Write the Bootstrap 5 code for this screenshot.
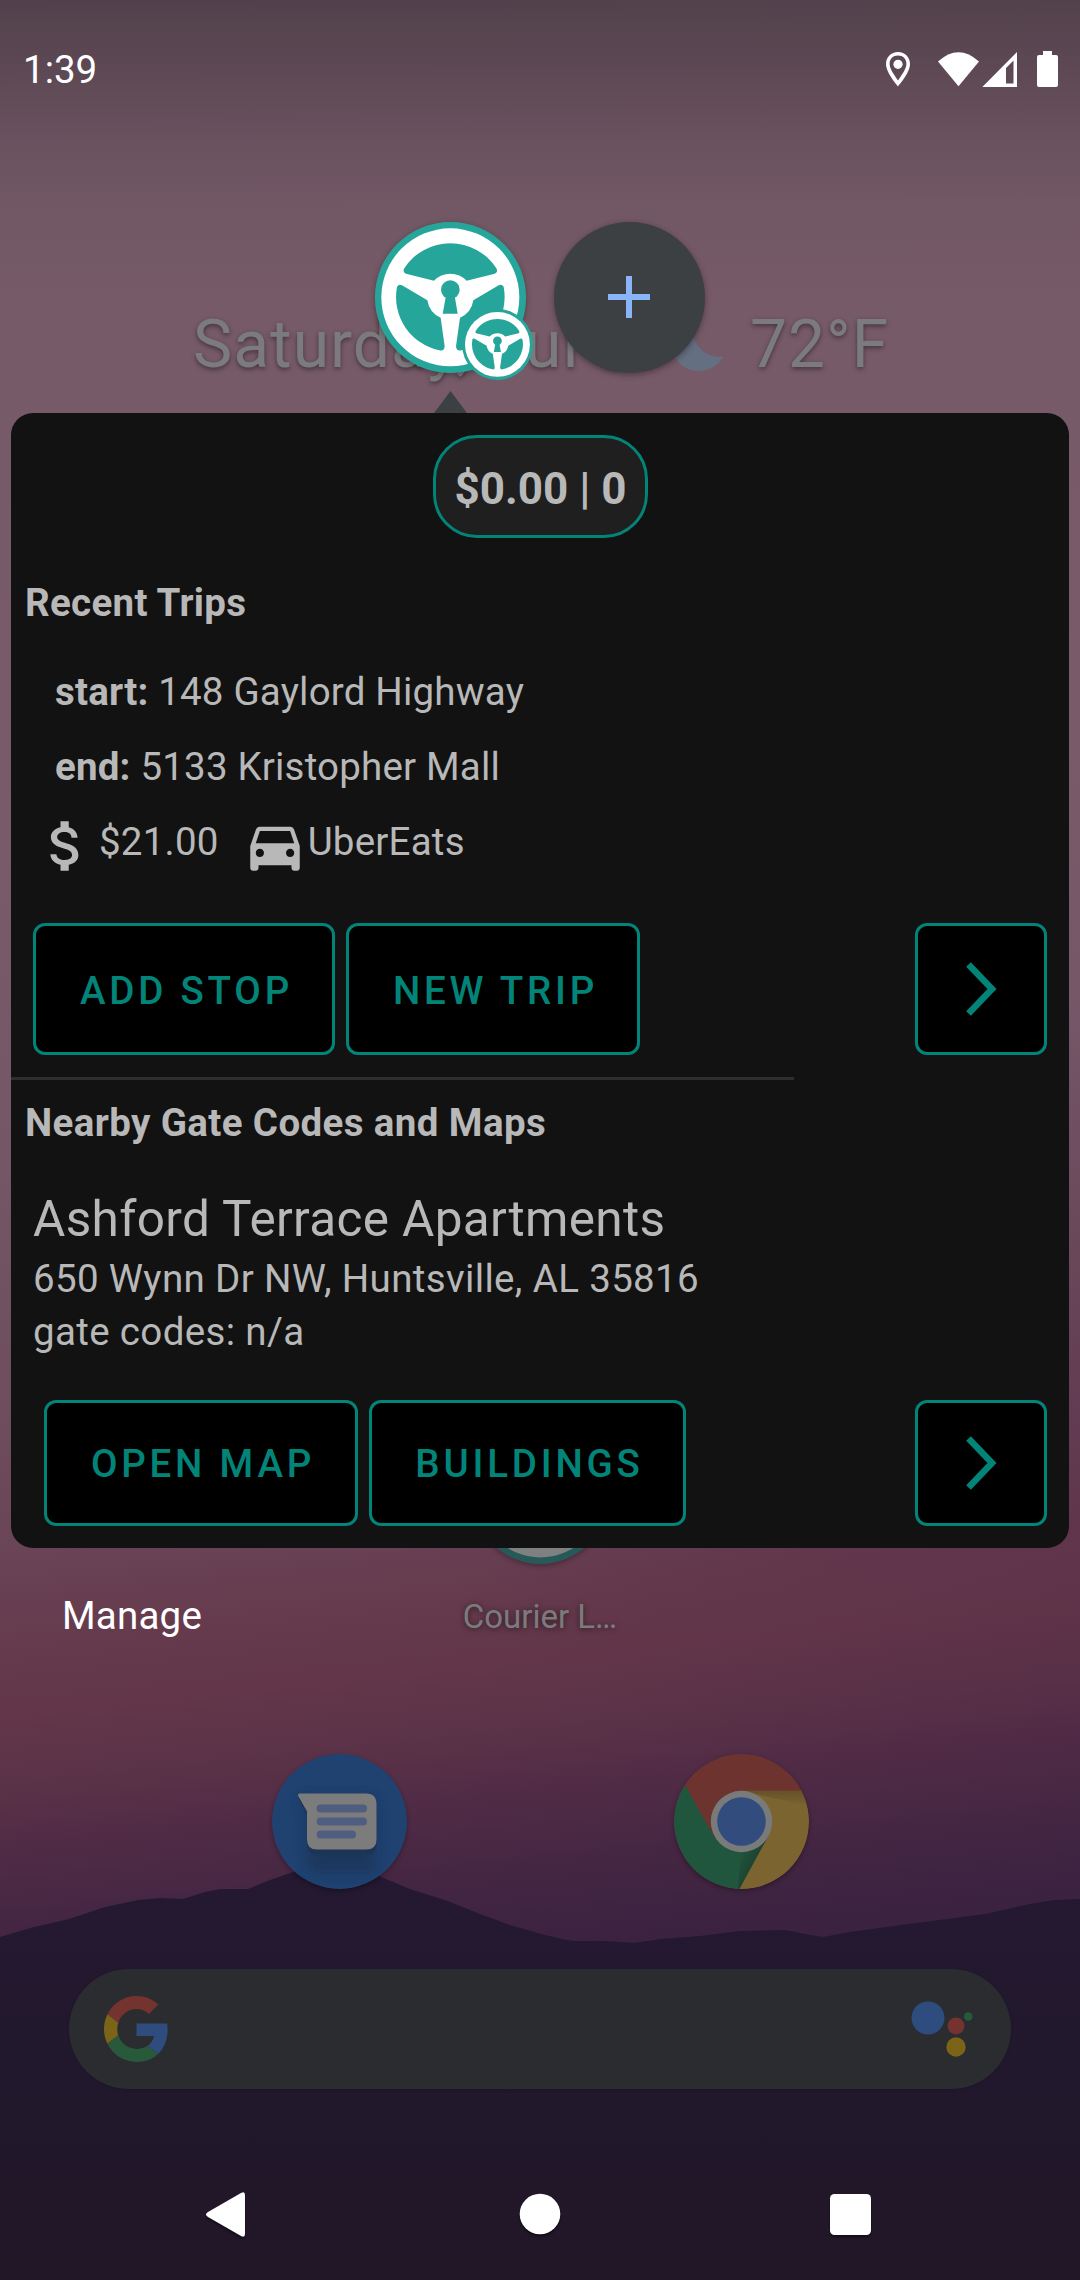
<!DOCTYPE html>
<html lang="en">
<head>
<meta charset="utf-8">
<meta name="viewport" content="width=device-width, initial-scale=1">
<title>Courier bubble</title>
<link href="https://cdn.jsdelivr.net/npm/bootstrap@5.3.0/dist/css/bootstrap.min.css" rel="stylesheet">
<style>
  body { margin: 0; background: #211728; font-family: Roboto, "Noto Sans", sans-serif; font-size: 38.5px; line-height: 45px; }
  .phone { width: 1080px; height: 2280px; overflow: hidden; }
  .wallpaper, .launcher, .overlay { position: absolute; inset: 0; }
  .wallpaper svg { display: block; }
  .sky { background:
    radial-gradient(ellipse 700px 420px at 100% 62%, rgba(72,30,66,.26), rgba(72,30,66,0)),
    linear-gradient(174deg, #745a68 0%, #775a68 17%, #785a68 35.500%, #755768 47%, #6e4e5c 58.500%, #6a4557 64.500%, #663b4e 68.500%, #633649 71.800%, #5a3248 74.800%, #502b46 77.300%, #442642 80.600%, #3a2240 84%, #382040 100%); }
  .scrim { position: absolute; inset: 0 0 auto 0; height: 300px; background: linear-gradient(rgba(34,30,36,.42), rgba(34,30,36,.29) 70px, rgba(34,30,36,.12) 150px, rgba(34,30,36,.06) 200px, rgba(34,30,36,0)); }

  .status-row { height: 136px; padding: 0 21px 0 23px; color: #fff; }
  .status-row span { padding-top: 2px; }
  .bubble-row { padding: 86px 0 0 375px; gap: 28px; }
  .bubble { width: 151px; height: 151px; border-radius: 50%; box-shadow: 0 2px 6px rgba(0,0,0,.35); position: relative; }
  .bubble-add { background: #3c4043; padding: 0 1px 1px 0; }
  .bubble-badge { position: absolute; left: 86.5px; top: 87px; width: 71px; height: 71px; }
  .pointer { margin: 18px 0 0 434px; display: block; }

  .panel { margin: 0 11px; height: 1135px; background: #121212; border-radius: 22px; color: #b8b8b8; padding-top: 22px; }
  .total { height: 103px; width: 215px; margin-left: 422px; border: 3px solid #028578; border-radius: 44px; background: #1f1f1f; font-size: 44px; padding-top: 5px; }
  .panel-title { font-size: 38.5px; line-height: 45px; margin: 0; padding-left: 14px; font-weight: 700; letter-spacing: .38px; }
  .panel-title.trips { margin-top: 42px; letter-spacing: .3px; }
  .trip { padding-left: 44px; margin-top: 44px; gap: 30px; letter-spacing: .19px; }
  .fare { padding-left: 22px; margin-top: 24px; height: 66px; letter-spacing: .22px; }
  .fare span { margin-top: 6px; }
  .fare .car { margin-left: 23px; }
  .fare svg { flex: none; }
  .actions { gap: 11px; padding: 0 22px; }
  .actions.first { margin-top: 44px; }
  .actions.second { margin-top: 46px; padding-left: 33px; }
  .btn.btn-tile { height: 132px; border: 3px solid #028578; border-radius: 12px; background: #000; color: #028578; font-size: 38.5px; line-height: 45px; letter-spacing: 3.8px; font-weight: 500; padding: 2px 0 0 5px; }
  .second .btn.btn-tile { height: 126px; padding: 1px 0 0 4px; }
  .btn.btn-next { padding: 0 !important; }
  .rule { width: 783px; height: 3px; background: #2e2e2e; margin: 22px 0 20px; }
  .place { padding-left: 22px; margin-top: 45px; gap: 8px; letter-spacing: .35px; }
  .place-name { font-size: 49.5px; line-height: 58px; }
  .manage { padding: 45px 0 0 62px; color: #fff; letter-spacing: .2px; }

  .launcher { color: #7b7b7d; }
  .glance { padding: 306px 0 0 193px; font-size: 66px; line-height: 77px; height: 383px; letter-spacing: 1px; text-shadow: 0 2px 5px rgba(0,0,0,.45); white-space: nowrap; }
  .glance .moon { margin: 6px 0 0 34px; }
  .glance .temp { margin-left: 25px; }
  .app { margin-top: 1046px; text-shadow: 0 1px 6px rgba(0,0,0,.6); font-size: 33px; line-height: 39px; }
  .round-icon { border-radius: 50%; box-shadow: 0 2px 5px rgba(0,0,0,.3); display: block; }
  .app .name { margin-top: 33px; }
  .hotseat { margin-top: 118px; padding-left: 272px; gap: 267px; }
  .search { margin: 80px 69px 0; height: 120px; border-radius: 60px; background: #2b2c30; padding: 0 38px 0 35px; box-shadow: 0 1px 3px rgba(0,0,0,.15); }
  .navkeys { margin-top: 95px; height: 60px; padding-left: 206px; }
  .navkeys svg { filter: drop-shadow(0 2px 1px rgba(0,0,0,.5)); }
</style>
</head>
<body>
<svg width="0" height="0" class="position-absolute">
  <defs>
    <symbol id="wheel" viewBox="75 64 453 453">
      <circle cx="301.500" cy="290.500" r="226.500" fill="#26a69a"/>
      <circle cx="301" cy="290" r="207" fill="#fff"/>
      <g fill="#26a69a">
        <path d="M163 203A164 164 0 0 1 439 203Q446 216 431 220L350 240Q330 219 301 219Q272 219 252 240L171 220Q156 216 163 203Z"/>
        <path d="M156 254L232 299Q238 337 272 351L284 437Q283 453 268 449A164 164 0 0 1 141 258Q147 249 156 254Z"/>
        <path d="M446 254L370 299Q364 337 330 351L318 437Q319 453 334 449A164 164 0 0 0 461 258Q455 249 446 254Z"/>
        <circle cx="301" cy="267" r="28"/>
        <path d="M288 285L278 339H323L314 285Z"/>
      </g>
    </symbol>
  </defs>
</svg>

<main class="phone position-relative">
  <div class="wallpaper sky">
    <div class="scrim"></div>
    <svg class="position-relative" width="1080" height="2280" viewBox="0 0 1080 2280">
      <defs>
        <linearGradient id="hill" x1="0" y1="1870" x2="0" y2="2280" gradientUnits="userSpaceOnUse">
          <stop offset="0" stop-color="#241931"/><stop offset=".5" stop-color="#22182d"/><stop offset="1" stop-color="#211727"/>
        </linearGradient>
      </defs>
      <path fill="url(#hill)" d="M0 1937L30 1928L69 1919L105 1907L138 1900L160 1898L183 1899L205 1892L220 1889H248L270 1880L296 1871L320 1866H350L379 1876L410 1889L448 1901L480 1914L510 1925L545 1935L572 1941L605 1941L634 1943L661 1939L700 1936L740 1931L785 1930L805 1934L823 1937L850 1932L916 1923L985 1914L1030 1904L1054 1900L1080 1899V2280H0Z"/>
    </svg>
  </div>

  <div class="launcher d-flex flex-column">
    <div class="glance d-flex">
      <span>Saturday, Jul 3</span>
      <svg class="moon" width="56" height="62" viewBox="668 312 56 62"><path fill="#646f81" d="M693 338C697 351 708 357 722 357A28 28 0 1 1 690 316C688 324 690 332 693 338Z"/></svg>
      <span class="temp">72°F</span>
    </div>
    <div class="app d-flex flex-column align-items-center">
      <svg class="round-icon" width="135" height="135" viewBox="0 0 135 135"><circle cx="67.500" cy="67.500" r="67.500" fill="#255a58"/><circle cx="67.500" cy="67.500" r="61" fill="#7f8080"/></svg>
      <div class="name">Courier L…</div>
    </div>
    <div class="hotseat d-flex">
      <svg class="round-icon" width="135" height="135" viewBox="272 1753.500 135 135">
        <defs><filter id="soft" x="-30%" y="-30%" width="160%" height="180%"><feGaussianBlur stdDeviation="6"/></filter></defs>
        <circle cx="339.500" cy="1821" r="67.500" fill="#1f4271"/>
        <path d="M300 1797H368Q376 1797 376 1808V1864Q376 1872 366 1872H318Q307 1872 307 1862V1816Z" fill="#1d3558" filter="url(#soft)" opacity=".8"/>
        <path d="M298 1797L307 1815V1843Q307 1854 317 1854H366Q376.500 1854 376.500 1844Z" fill="#1c3456"/>
        <path d="M300 1793H366Q376.500 1793 376.500 1804V1839Q376.500 1849 366 1849H317Q307 1849 307 1839V1811L298.500 1796Q297 1793 300 1793Z" fill="#7b7c7b"/>
        <g stroke="#4e5d80" stroke-width="8" stroke-linecap="round"><path d="M320.600 1808H363M320.600 1821H363M320.600 1834H352"/></g>
      </svg>
      <svg class="round-icon" width="135" height="135" viewBox="674 1753.500 135 135">
        <defs>
          <clipPath id="disc"><circle cx="741.500" cy="1821" r="67.500"/></clipPath>
          <linearGradient id="shade" x1="0" y1="0" x2="0" y2="1"><stop offset="0" stop-color="#3c2d1c" stop-opacity=".35"/><stop offset="1" stop-color="#3c2d1c" stop-opacity="0"/></linearGradient>
          <linearGradient id="shadeG" x1="764" y1="1852" x2="744" y2="1842" gradientUnits="userSpaceOnUse"><stop offset="0" stop-color="#1d3528" stop-opacity=".7"/><stop offset="1" stop-color="#1d3528" stop-opacity="0"/></linearGradient>
        </defs>
        <g clip-path="url(#disc)">
          <rect x="674" y="1753" width="136" height="136" fill="#6d332e"/>
          <path d="M741 1790.300H812V1892H736L768 1836Z" fill="#7c6430"/>
          <path d="M741 1790.300H812V1806Z" fill="url(#shade)"/>
          <path d="M684.500 1784L714 1836L741 1851L768 1836L737.500 1892H660V1784Z" fill="#20563d"/>
          <path d="M741 1851L768 1836L737.500 1892Z" fill="url(#shadeG)"/>
        </g>
        <circle cx="741.500" cy="1821" r="30.700" fill="#797a7a"/><circle cx="741.500" cy="1821" r="24.300" fill="#324c7d"/>
      </svg>
    </div>
    <div class="search d-flex align-items-center justify-content-between">
      <svg width="65" height="66" viewBox="0 0 48 48" preserveAspectRatio="none">
        <path fill="#75332f" d="M24 9.500c3.540 0 6.710 1.220 9.210 3.600l6.850-6.850C35.900 2.380 30.470 0 24 0 14.620 0 6.510 5.380 2.560 13.220l7.980 6.190C12.430 13.720 17.740 9.500 24 9.500z"/>
        <path fill="#2e4c7d" d="M46.980 24.550c0-1.570-.15-3.090-.380-4.550H24v9.020h12.940c-.58 2.960-2.260 5.480-4.780 7.180l7.730 6c4.510-4.180 7.090-10.360 7.090-17.650z"/>
        <path fill="#7b6418" d="M10.530 28.590c-.48-1.450-.76-2.990-.76-4.590s.27-3.140.76-4.590l-7.980-6.190C.92 16.460 0 20.120 0 24c0 3.880.92 7.540 2.560 10.780l7.970-6.190z"/>
        <path fill="#28593a" d="M24 48c6.480 0 11.930-2.130 15.890-5.810l-7.730-6c-2.150 1.450-4.920 2.300-8.160 2.300-6.260 0-11.570-4.220-13.470-9.910l-7.980 6.190C6.510 42.620 14.620 48 24 48z"/>
      </svg>
      <svg width="62" height="62" viewBox="911 1998 62 62"><circle cx="928" cy="2018" r="16.500" fill="#2e4c7d"/><circle cx="956" cy="2026" r="8.400" fill="#75332f"/><circle cx="968.300" cy="2016.500" r="4.300" fill="#28593a"/><circle cx="956" cy="2047" r="9.700" fill="#7b6418"/></svg>
    </div>
    <div class="navkeys d-flex align-items-center">
      <svg width="665" height="60" viewBox="206 2184 665 60" fill="#fff">
        <path d="M208 2212L241 2193Q245 2191 245 2195V2234Q245 2238 241 2236L208 2217Q204 2214.500 208 2212Z"/>
        <circle cx="540" cy="2214" r="20.300"/>
        <rect x="830" y="2194" width="41" height="41" rx="4.500"/>
      </svg>
    </div>
  </div>

  <div class="overlay d-flex flex-column">
    <header class="status-row d-flex align-items-center justify-content-between">
      <span>1:39</span>
      <svg width="174" height="40" viewBox="885 46 174 40" fill="#fff">
        <path fill-rule="evenodd" d="M898 50C905 50 910 55 910 62C910 71 898 84.300 898 84.300S886 71 886 62C886 55 891 50 898 50ZM898 53.600C893 53.600 889.600 57 889.600 62C889.600 67 895 74 898 78.400C901 74 906.400 67 906.400 62C906.400 57 903 53.600 898 53.600Z"/>
        <circle cx="898" cy="62.300" r="4.600"/>
        <path d="M938 59.500Q958.500 41 979 59.500L958.500 84.300Z"/>
        <path fill-rule="evenodd" d="M1017 50V85H982.300ZM1013.500 58.500L1006 66V81.500H1013.500Z"/>
        <path d="M1043 49h9v4h4q2 0 2 2V83q0 2-2 2h-17q-2 0-2-2V55q0-2 2-2h4z"/>
      </svg>
    </header>
    <div class="bubble-row d-flex">
      <div class="bubble">
        <svg class="d-block" width="151" height="151"><use href="#wheel"/></svg>
        <svg class="bubble-badge"><use href="#wheel"/></svg>
      </div>
      <div class="bubble bubble-add d-flex align-items-center justify-content-center">
        <svg width="42" height="42" viewBox="0 0 42 42"><path d="M21 0V42M0 21H42" stroke="#8ab4f8" stroke-width="6"/></svg>
      </div>
    </div>
    <svg class="pointer" width="33" height="22" viewBox="0 0 33 22"><path d="M16.500 0L33 22H0Z" fill="#3c4043"/></svg>

    <section class="panel">
      <div class="total d-flex align-items-center justify-content-center fw-bold">$0.00 | 0</div>
      <h2 class="panel-title trips">Recent Trips</h2>
      <div class="trip d-flex flex-column">
        <div><b>start:</b> 148 Gaylord Highway</div>
        <div><b>end:</b> 5133 Kristopher Mall</div>
      </div>
      <div class="fare d-flex">
        <svg width="66" height="66" viewBox="0 0 24 24" fill="#b8b8b8"><path d="M11.800 10.900c-2.270-.59-3-1.200-3-2.150 0-1.090 1.010-1.850 2.700-1.850 1.780 0 2.440.85 2.500 2.100h2.210c-.07-1.720-1.120-3.300-3.210-3.810V3h-3v2.160c-1.940.42-3.500 1.680-3.500 3.610 0 2.310 1.910 3.460 4.700 4.130 2.500.6 3 1.480 3 2.410 0 .69-.49 1.790-2.700 1.790-2.060 0-2.870-.92-2.980-2.100h-2.200c.12 2.190 1.760 3.420 3.680 3.830V21h3v-2.150c1.950-.37 3.500-1.500 3.500-3.550 0-2.840-2.430-3.810-4.700-4.400z"/></svg>
        <span>$21.00</span>
        <svg class="car" width="66" height="66" viewBox="0 0 24 24" fill="#b8b8b8"><path d="M18.920 6.010C18.720 5.420 18.160 5 17.500 5h-11c-.66 0-1.210.42-1.420 1.010L3 12v8c0 .55.45 1 1 1h1c.55 0 1-.45 1-1v-1h12v1c0 .55.45 1 1 1h1c.55 0 1-.45 1-1v-8l-2.080-5.990zM6.500 16c-.83 0-1.500-.67-1.500-1.500S5.670 13 6.500 13s1.500.67 1.500 1.500S7.330 16 6.500 16zm11 0c-.83 0-1.500-.67-1.500-1.500s.67-1.500 1.500-1.500 1.500.67 1.500 1.500-.67 1.500-1.500 1.500zM5 11l1.500-4.500h11L19 11H5z"/></svg>
        <span>UberEats</span>
      </div>
      <div class="actions first d-flex">
        <button class="btn btn-tile" style="width:302px">ADD STOP</button>
        <button class="btn btn-tile" style="width:294px">NEW TRIP</button>
        <button class="btn btn-tile btn-next ms-auto" style="width:132px" aria-label="Next trip"><svg width="34" height="60" viewBox="0 0 34 60" fill="none"><path d="M4.500 5.500L28 30L4.500 54.500" stroke="#028578" stroke-width="6.500"/></svg></button>
      </div>
      <div class="rule"></div>
      <h2 class="panel-title">Nearby Gate Codes and Maps</h2>
      <div class="place d-flex flex-column">
        <div class="place-name">Ashford Terrace Apartments</div>
        <div>650 Wynn Dr NW, Huntsville, AL 35816</div>
        <div>gate codes: n/a</div>
      </div>
      <div class="actions second d-flex">
        <button class="btn btn-tile" style="width:314px">OPEN MAP</button>
        <button class="btn btn-tile" style="width:317px">BUILDINGS</button>
        <button class="btn btn-tile btn-next ms-auto" style="width:132px" aria-label="Next place"><svg width="34" height="60" viewBox="0 0 34 60" fill="none"><path d="M4.500 5.500L28 30L4.500 54.500" stroke="#028578" stroke-width="6.500"/></svg></button>
      </div>
    </section>
    <div class="manage">Manage</div>
  </div>
</main>
<script src="https://cdn.jsdelivr.net/npm/bootstrap@5.3.0/dist/js/bootstrap.bundle.min.js"></script>
</body>
</html>
